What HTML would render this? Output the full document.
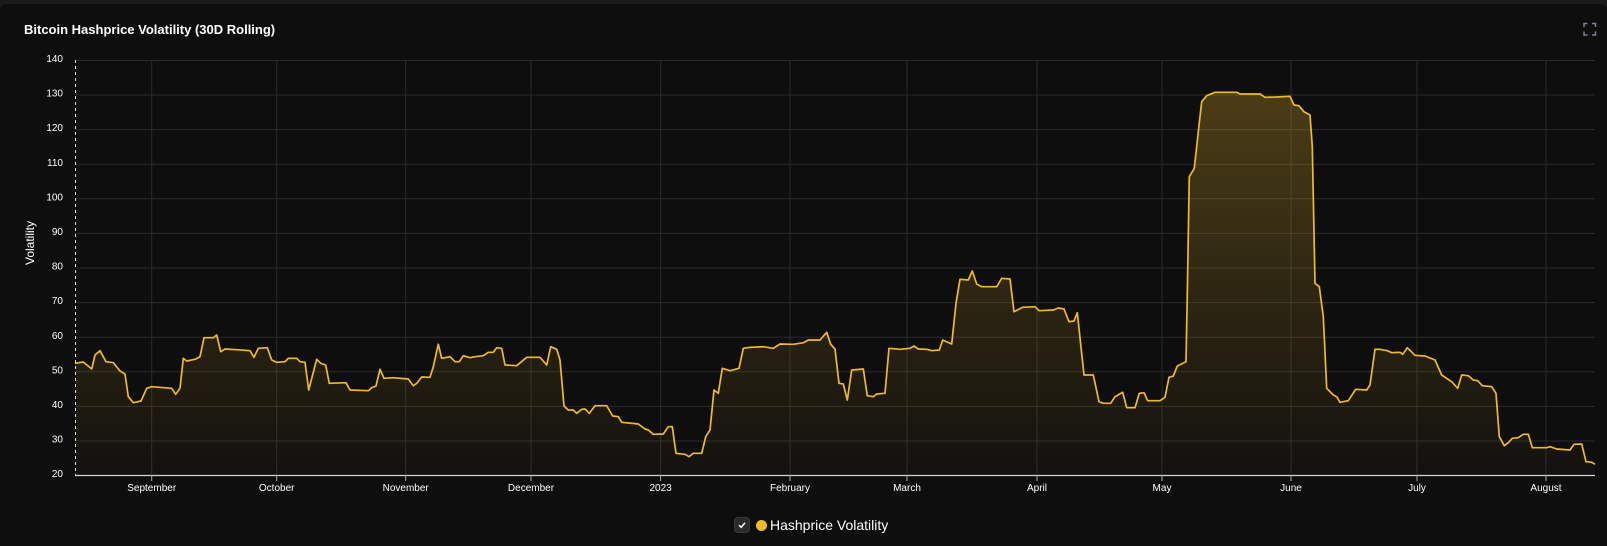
<!DOCTYPE html>
<html><head><meta charset="utf-8"><style>
html,body{margin:0;padding:0;background:#1b1b1b;}
body{width:1607px;height:546px;overflow:hidden;position:relative;font-family:"Liberation Sans",Arial,sans-serif;}
.card{position:absolute;left:0;top:4px;width:1607px;height:542px;background:#0e0e0e;border-radius:6px 6px 0 0;}
.title{position:absolute;left:24px;top:22px;color:#fff;font-weight:bold;font-size:13px;}
svg{position:absolute;left:0;top:0;}
.legend{position:absolute;left:734px;top:517px;display:flex;align-items:center;}
.cb{width:16px;height:16px;border-radius:4px;background:#2a2a2a;border:1px solid #3a3a3a;box-sizing:border-box;display:flex;align-items:center;justify-content:center;}
.dot{width:11px;height:11px;border-radius:50%;background:#f0b92c;margin-left:6px;}
.lt{color:#fff;font-size:14px;margin-left:3px;}
</style></head><body>
<div class="card"></div>
<div class="title">Bitcoin Hashprice Volatility (30D Rolling)</div>
<svg width="1607" height="546" viewBox="0 0 1607 546">
<defs>
<linearGradient id="g" gradientUnits="userSpaceOnUse" x1="0" y1="92" x2="0" y2="475">
<stop offset="0" stop-color="#f0b92c" stop-opacity="0.27"/>
<stop offset="1" stop-color="#f0b92c" stop-opacity="0.02"/>
</linearGradient>
</defs>
<g stroke="#2a2a2a" stroke-width="1">
<line x1="75" x2="1595" y1="60.5" y2="60.5"/>
<line x1="75" x2="1595" y1="95" y2="95"/>
<line x1="75" x2="1595" y1="129.6" y2="129.6"/>
<line x1="75" x2="1595" y1="164.2" y2="164.2"/>
<line x1="75" x2="1595" y1="198.8" y2="198.8"/>
<line x1="75" x2="1595" y1="233.4" y2="233.4"/>
<line x1="75" x2="1595" y1="268" y2="268"/>
<line x1="75" x2="1595" y1="302.6" y2="302.6"/>
<line x1="75" x2="1595" y1="337.2" y2="337.2"/>
<line x1="75" x2="1595" y1="371.8" y2="371.8"/>
<line x1="75" x2="1595" y1="406.4" y2="406.4"/>
<line x1="75" x2="1595" y1="441" y2="441"/>
<line y1="60" y2="475" x1="151.7" x2="151.7"/>
<line y1="60" y2="475" x1="276.7" x2="276.7"/>
<line y1="60" y2="475" x1="405.7" x2="405.7"/>
<line y1="60" y2="475" x1="531" x2="531"/>
<line y1="60" y2="475" x1="660.6" x2="660.6"/>
<line y1="60" y2="475" x1="790" x2="790"/>
<line y1="60" y2="475" x1="907" x2="907"/>
<line y1="60" y2="475" x1="1037" x2="1037"/>
<line y1="60" y2="475" x1="1162" x2="1162"/>
<line y1="60" y2="475" x1="1291" x2="1291"/>
<line y1="60" y2="475" x1="1417" x2="1417"/>
<line y1="60" y2="475" x1="1546" x2="1546"/>
</g>
<path fill="url(#g)" stroke="none" d="M75,475 L75,363.3 L83.3,362 L91.7,369 L95,355 L100,350.7 L106,361.7 L113.3,362.7 L120,371 L125,374 L128.3,396.7 L133.3,402.7 L141,401 L146.7,388.3 L151.7,386.7 L171.7,388.3 L175.7,394.3 L180,388.3 L183.3,358.3 L186.7,361 L195,359.3 L200,356.7 L204,337.7 L213.3,337.7 L216.7,335 L220.7,351.7 L225,349 L236.7,349.7 L250,350.7 L254,357.3 L258.3,348.3 L267.3,347.7 L271.7,360 L276.7,362.3 L285,361.7 L288.3,358.3 L296.7,358.3 L300,361.7 L305,362.3 L308.7,390 L316.7,359.3 L320.7,363.3 L325.7,365 L329.3,383.3 L346,382.7 L350,390 L368.3,390.7 L371.7,387.7 L376,386 L380,369.3 L384,378.3 L393.3,377.7 L408.3,379 L413.3,385.7 L416.7,383.3 L421.7,377 L430,377.3 L433.3,366.7 L438.3,344.3 L441.7,358.3 L450,356.7 L455,361.7 L459.3,361.7 L463.3,355.7 L470,357.7 L475,356.7 L483.3,355.7 L488.3,352.3 L493.3,352.3 L496.7,347.7 L501.7,348.3 L505,365 L516.7,365.7 L526.7,357.3 L540,357.3 L546.7,365 L550.7,346.7 L556.7,349.3 L560,360 L564,406 L568.3,410 L573.3,410 L576.7,413.3 L581.7,409.3 L585,409 L589.3,413.3 L595,405.7 L606.7,405.7 L612.7,416 L618.3,416.7 L621.7,422.3 L638.3,424 L645,429 L648.3,430 L653.3,434.3 L663.3,434 L668.3,426.7 L672.3,426.7 L676,453.3 L685,454.3 L689,456.7 L693.3,453.3 L701.7,453.3 L705.7,436.7 L710,430 L714,390 L718.3,393.3 L722.3,368.3 L730,370.7 L739,368.3 L743.3,348.3 L750,347.3 L763.3,346.7 L773.3,348.3 L780,344 L793.3,344.3 L803.3,342.7 L808.3,340 L820,340 L826.7,332.3 L830.7,344.3 L835,349 L839,383.3 L843.3,384 L847.3,400 L851.7,370 L863.3,369 L867.3,395.7 L873.3,396.7 L876.7,394 L885,393.3 L889,348.3 L900,349.3 L910,348.3 L914,346 L918.3,349 L926.7,349.3 L931.7,350.7 L939.3,350 L942.7,340 L951.7,344 L956,303.3 L960,279.3 L968.3,280 L972.3,271 L976.7,284 L981.7,286.7 L996.7,286.7 L1001.7,278.3 L1010,279 L1014,311.7 L1022.7,307.3 L1035,306.7 L1039.3,310.7 L1053.3,310 L1058.3,308 L1064,309 L1069,321.7 L1074,321 L1077.3,312.7 L1084,375 L1093.3,375 L1099,401.7 L1103.3,403.3 L1110.7,403.3 L1115,396.7 L1122.7,392.3 L1126.7,407.7 L1135,407.7 L1139.3,393.3 L1144,392.7 L1147.7,400.7 L1160,400.7 L1165,397.3 L1169,377.3 L1173.3,376 L1177.3,366 L1186,361.7 L1187.3,293.3 L1189.3,176.7 L1194.3,168.3 L1198.3,131.7 L1201.7,101.7 L1206.7,95.7 L1215,92.3 L1236.7,92.3 L1240,94 L1260,94 L1265,97.3 L1276.7,97 L1290,96.3 L1294,105 L1299,105.7 L1304,111.7 L1310,115 L1312.3,146.7 L1315,283.3 L1319.3,286.7 L1323.3,316.7 L1326.7,388.3 L1333.3,395 L1336.7,396.7 L1340,402.3 L1348.3,400.7 L1355.7,389.3 L1366.7,390 L1370,385 L1375,349.3 L1380,349.3 L1387.3,350.7 L1391.7,352.7 L1400,352.3 L1402.7,354.3 L1407.3,347.7 L1415,355.3 L1425,356 L1435,360 L1441.7,375 L1451.7,381.7 L1457.7,388.3 L1461.7,375 L1468.3,375.7 L1473.3,380 L1477.7,380.7 L1482.3,385.7 L1491.7,386.7 L1496,393.3 L1499.3,436.7 L1504.3,445.7 L1508.3,442.7 L1512.3,438.3 L1518.3,437.7 L1523.3,434.3 L1528.3,434.3 L1532.3,447.7 L1546.7,447.7 L1550,446.7 L1556.7,449 L1570,450 L1574,444.3 L1581.7,444 L1586,461.7 L1591.7,462.3 L1595,464.3 L1595,475 Z"/>
<path fill="none" stroke="#f0b92c" stroke-width="1.7" stroke-linejoin="round" d="M75,363.3 L83.3,362 L91.7,369 L95,355 L100,350.7 L106,361.7 L113.3,362.7 L120,371 L125,374 L128.3,396.7 L133.3,402.7 L141,401 L146.7,388.3 L151.7,386.7 L171.7,388.3 L175.7,394.3 L180,388.3 L183.3,358.3 L186.7,361 L195,359.3 L200,356.7 L204,337.7 L213.3,337.7 L216.7,335 L220.7,351.7 L225,349 L236.7,349.7 L250,350.7 L254,357.3 L258.3,348.3 L267.3,347.7 L271.7,360 L276.7,362.3 L285,361.7 L288.3,358.3 L296.7,358.3 L300,361.7 L305,362.3 L308.7,390 L316.7,359.3 L320.7,363.3 L325.7,365 L329.3,383.3 L346,382.7 L350,390 L368.3,390.7 L371.7,387.7 L376,386 L380,369.3 L384,378.3 L393.3,377.7 L408.3,379 L413.3,385.7 L416.7,383.3 L421.7,377 L430,377.3 L433.3,366.7 L438.3,344.3 L441.7,358.3 L450,356.7 L455,361.7 L459.3,361.7 L463.3,355.7 L470,357.7 L475,356.7 L483.3,355.7 L488.3,352.3 L493.3,352.3 L496.7,347.7 L501.7,348.3 L505,365 L516.7,365.7 L526.7,357.3 L540,357.3 L546.7,365 L550.7,346.7 L556.7,349.3 L560,360 L564,406 L568.3,410 L573.3,410 L576.7,413.3 L581.7,409.3 L585,409 L589.3,413.3 L595,405.7 L606.7,405.7 L612.7,416 L618.3,416.7 L621.7,422.3 L638.3,424 L645,429 L648.3,430 L653.3,434.3 L663.3,434 L668.3,426.7 L672.3,426.7 L676,453.3 L685,454.3 L689,456.7 L693.3,453.3 L701.7,453.3 L705.7,436.7 L710,430 L714,390 L718.3,393.3 L722.3,368.3 L730,370.7 L739,368.3 L743.3,348.3 L750,347.3 L763.3,346.7 L773.3,348.3 L780,344 L793.3,344.3 L803.3,342.7 L808.3,340 L820,340 L826.7,332.3 L830.7,344.3 L835,349 L839,383.3 L843.3,384 L847.3,400 L851.7,370 L863.3,369 L867.3,395.7 L873.3,396.7 L876.7,394 L885,393.3 L889,348.3 L900,349.3 L910,348.3 L914,346 L918.3,349 L926.7,349.3 L931.7,350.7 L939.3,350 L942.7,340 L951.7,344 L956,303.3 L960,279.3 L968.3,280 L972.3,271 L976.7,284 L981.7,286.7 L996.7,286.7 L1001.7,278.3 L1010,279 L1014,311.7 L1022.7,307.3 L1035,306.7 L1039.3,310.7 L1053.3,310 L1058.3,308 L1064,309 L1069,321.7 L1074,321 L1077.3,312.7 L1084,375 L1093.3,375 L1099,401.7 L1103.3,403.3 L1110.7,403.3 L1115,396.7 L1122.7,392.3 L1126.7,407.7 L1135,407.7 L1139.3,393.3 L1144,392.7 L1147.7,400.7 L1160,400.7 L1165,397.3 L1169,377.3 L1173.3,376 L1177.3,366 L1186,361.7 L1187.3,293.3 L1189.3,176.7 L1194.3,168.3 L1198.3,131.7 L1201.7,101.7 L1206.7,95.7 L1215,92.3 L1236.7,92.3 L1240,94 L1260,94 L1265,97.3 L1276.7,97 L1290,96.3 L1294,105 L1299,105.7 L1304,111.7 L1310,115 L1312.3,146.7 L1315,283.3 L1319.3,286.7 L1323.3,316.7 L1326.7,388.3 L1333.3,395 L1336.7,396.7 L1340,402.3 L1348.3,400.7 L1355.7,389.3 L1366.7,390 L1370,385 L1375,349.3 L1380,349.3 L1387.3,350.7 L1391.7,352.7 L1400,352.3 L1402.7,354.3 L1407.3,347.7 L1415,355.3 L1425,356 L1435,360 L1441.7,375 L1451.7,381.7 L1457.7,388.3 L1461.7,375 L1468.3,375.7 L1473.3,380 L1477.7,380.7 L1482.3,385.7 L1491.7,386.7 L1496,393.3 L1499.3,436.7 L1504.3,445.7 L1508.3,442.7 L1512.3,438.3 L1518.3,437.7 L1523.3,434.3 L1528.3,434.3 L1532.3,447.7 L1546.7,447.7 L1550,446.7 L1556.7,449 L1570,450 L1574,444.3 L1581.7,444 L1586,461.7 L1591.7,462.3 L1595,464.3"/>
<line x1="75.5" x2="75.5" y1="60" y2="475" stroke="#ddd" stroke-width="1" stroke-dasharray="3,3"/>
<line x1="75" x2="1595" y1="475.5" y2="475.5" stroke="#d8d8d8" stroke-width="1.3"/>
<g stroke="#aaa" stroke-width="1">
<line x1="151.7" x2="151.7" y1="475" y2="481"/><line x1="276.7" x2="276.7" y1="475" y2="481"/>
<line x1="405.7" x2="405.7" y1="475" y2="481"/><line x1="531" x2="531" y1="475" y2="481"/>
<line x1="660.6" x2="660.6" y1="475" y2="481"/><line x1="790" x2="790" y1="475" y2="481"/>
<line x1="907" x2="907" y1="475" y2="481"/><line x1="1037" x2="1037" y1="475" y2="481"/>
<line x1="1162" x2="1162" y1="475" y2="481"/><line x1="1291" x2="1291" y1="475" y2="481"/>
<line x1="1417" x2="1417" y1="475" y2="481"/><line x1="1546" x2="1546" y1="475" y2="481"/>
</g>
<g fill="#fff" font-family="Liberation Sans, Arial, sans-serif" font-size="10" text-anchor="end">
<text x="63" y="62">140</text><text x="63" y="96.5">130</text><text x="63" y="131">120</text>
<text x="63" y="166">110</text><text x="63" y="200.5">100</text><text x="63" y="235">90</text>
<text x="63" y="269.5">80</text><text x="63" y="304">70</text><text x="63" y="339">60</text>
<text x="63" y="373.5">50</text><text x="63" y="408">40</text><text x="63" y="442.5">30</text>
<text x="63" y="477">20</text>
</g>
<g fill="#fff" font-family="Liberation Sans, Arial, sans-serif" font-size="10" text-anchor="middle">
<text x="151.7" y="491">September</text><text x="276.7" y="491">October</text>
<text x="405.7" y="491">November</text><text x="531" y="491">December</text>
<text x="660.6" y="491">2023</text><text x="790" y="491">February</text>
<text x="907" y="491">March</text><text x="1037" y="491">April</text>
<text x="1162" y="491">May</text><text x="1291" y="491">June</text>
<text x="1417" y="491">July</text><text x="1546" y="491">August</text>
</g>
<text x="0" y="0" transform="translate(34,243) rotate(-90)" fill="#fff" font-family="Liberation Sans, Arial, sans-serif" font-size="12" text-anchor="middle">Volatility</text>
<g fill="none" stroke="#7a8290" stroke-width="1.5">
<path d="M1584,27 V23.5 H1587.5 M1592,23.5 H1595.5 V27 M1595.5,31.5 V35 H1592 M1587.5,35 H1584 V31.5"/>
</g>
</svg>
<div class="legend"><div class="cb"><svg width="10" height="10" viewBox="0 0 10 10" style="position:static"><path d="M2,5.2 L4.2,7.3 L8,2.8" fill="none" stroke="#fff" stroke-width="1.5"/></svg></div><div class="dot"></div><div class="lt">Hashprice Volatility</div></div>
</body></html>
